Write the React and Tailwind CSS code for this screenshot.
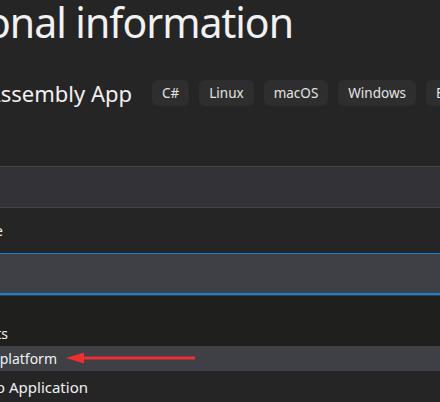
import React from "react";

const font = { fontFamily: '"Noto Sans", "Open Sans", sans-serif' };

const tags = ["C#", "Linux", "macOS", "Windows", "Blazor"];

// text whose right edge sits at a given x; the start spills out of view on the left
const EndAt = ({ className, children }) => (
  <div className={`flex shrink-0 justify-end whitespace-nowrap ${className}`}>
    {children}
  </div>
);

const Arrow = () => (
  <svg
    className="absolute left-[64px] top-[351px]"
    width="134"
    height="14"
    viewBox="0 0 134 14"
  >
    <line x1="16" y1="7" x2="131" y2="7" stroke="#ee2f2f" strokeWidth="3" />
    <polygon points="2,7 20,1.5 20,12.5" fill="#ee2f2f" />
  </svg>
);

export default function App() {
  return (
    <div
      className="relative w-[440px] h-[402px] overflow-hidden bg-[#252526] text-[#f1f1f1]"
      style={font}
    >
      {/* title */}
      <div className="h-[60px]">
        <EndAt className="w-[293px] text-[41px] leading-[44px] tracking-[-1px]">
          Additional information
        </EndAt>
      </div>

      {/* template name + tags */}
      <div className="mt-[20px] h-[26px] flex items-center">
        <EndAt className="w-[132px] text-[22px] leading-[26px]">
          Blazor WebAssembly App
        </EndAt>
        <div className="ml-[20px] flex gap-[10px]">
          {tags.map((t) => (
            <span
              key={t}
              className="h-[26px] px-[10px] flex items-center rounded-[6px] bg-[#2e2e2e] text-[13.5px] text-[#e4e4e4] whitespace-nowrap"
            >
              {t}
            </span>
          ))}
        </div>
      </div>

      {/* framework select */}
      <div className="mt-[60px] h-[42px] border-y border-[#454547] bg-[#333337]" />

      {/* auth label */}
      <div className="h-[45px] flex items-center">
        <EndAt className="w-[3px] text-[14px]">Authentication type</EndAt>
      </div>

      {/* auth select, focused */}
      <div className="h-[42px] border-t border-b-2 border-[#1b7fd8] bg-[#3f3f46]" />

      {/* open list */}
      <div className="border-t border-[#3a3a3f] bg-[#1f1f1d] text-[14px]">
        <div className="h-[25px] flex items-center">
          <EndAt className="w-[1px] -ml-[30px]">None</EndAt>
        </div>
        <div className="h-[25px] flex items-center">
          <EndAt className="w-[8px]">Individual Accounts</EndAt>
        </div>
        <div className="h-[25px] flex items-center bg-[#3f3f46]">
          <EndAt className="w-[57px]">Microsoft identity platform</EndAt>
        </div>
      </div>

      {/* checkbox below */}
      <div className="h-[32px] flex items-center text-[15px]">
        <EndAt className="w-[88px]">Progressive Web Application</EndAt>
      </div>

      <Arrow />
    </div>
  );
}
